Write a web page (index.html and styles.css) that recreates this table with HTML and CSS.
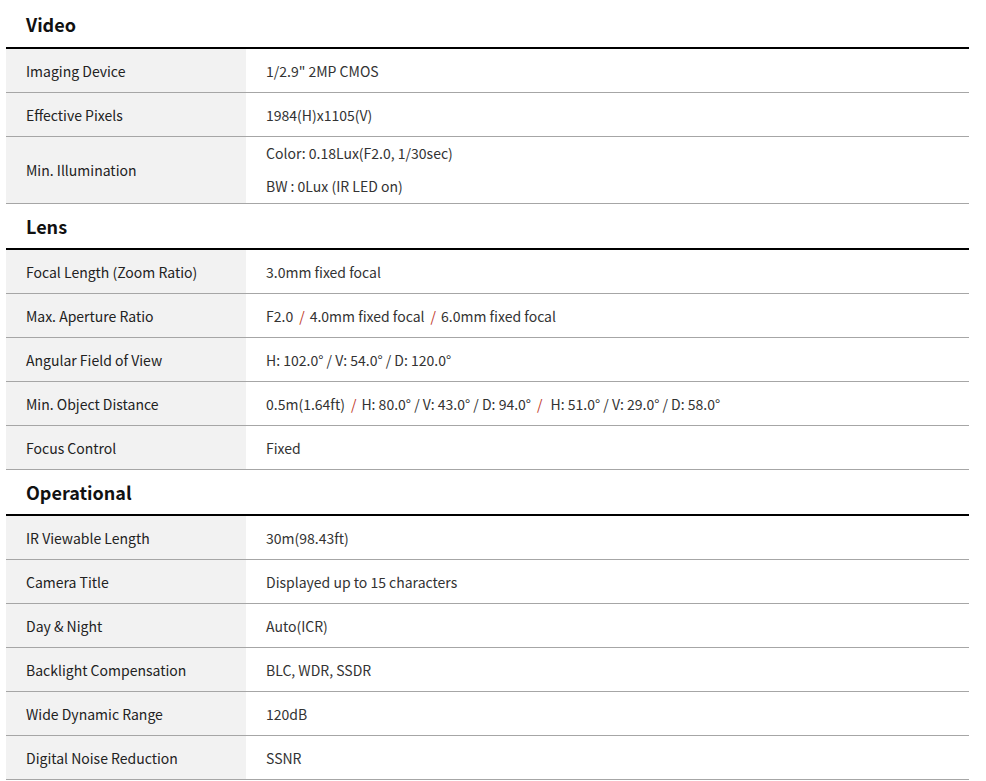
FILE: index.html
```html
<!DOCTYPE html>
<html lang="en">
<head>
<meta charset="utf-8">
<title>Specifications</title>
<link rel="stylesheet" href="styles.css">
</head>
<body>
<div class="spec">
  <section class="group first">
    <h2 class="group-title">Video</h2>
    <div class="rows">
      <div class="row"><div class="label">Imaging Device</div><div class="value">1/2.9" 2MP CMOS</div></div>
      <div class="row"><div class="label">Effective Pixels</div><div class="value">1984(H)x1105(V)</div></div>
      <div class="row"><div class="label">Min. Illumination</div><div class="value multi"><p>Color: 0.18Lux(F2.0, 1/30sec)</p><p>BW : 0Lux (IR LED on)</p></div></div>
    </div>
  </section>
  <section class="group">
    <h2 class="group-title">Lens</h2>
    <div class="rows">
      <div class="row"><div class="label">Focal Length (Zoom Ratio)</div><div class="value">3.0mm fixed focal</div></div>
      <div class="row"><div class="label">Max. Aperture Ratio</div><div class="value">F2.0<span class="sep">/</span>4.0mm fixed focal<span class="sep">/</span>6.0mm fixed focal</div></div>
      <div class="row"><div class="label">Angular Field of View</div><div class="value">H: 102.0° / V: 54.0° / D: 120.0°</div></div>
      <div class="row"><div class="label">Min. Object Distance</div><div class="value">0.5m(1.64ft)<span class="sep">/</span>H: 80.0° / V: 43.0° / D: 94.0°<span class="sep wide">/</span>H: 51.0° / V: 29.0° / D: 58.0°</div></div>
      <div class="row"><div class="label">Focus Control</div><div class="value">Fixed</div></div>
    </div>
  </section>
  <section class="group">
    <h2 class="group-title">Operational</h2>
    <div class="rows">
      <div class="row"><div class="label">IR Viewable Length</div><div class="value">30m(98.43ft)</div></div>
      <div class="row"><div class="label">Camera Title</div><div class="value">Displayed up to 15 characters</div></div>
      <div class="row"><div class="label">Day &amp; Night</div><div class="value">Auto(ICR)</div></div>
      <div class="row"><div class="label">Backlight Compensation</div><div class="value">BLC, WDR, SSDR</div></div>
      <div class="row"><div class="label">Wide Dynamic Range</div><div class="value">120dB</div></div>
      <div class="row"><div class="label">Digital Noise Reduction</div><div class="value">SSNR</div></div>
    </div>
  </section>
</div>
</body>
</html>
```

FILE: styles.css
```css
html, body {
  margin: 0;
  padding: 0;
  background: #ffffff;
}

body {
  font-family: "Noto Sans CJK KR", "Noto Sans", sans-serif;
  font-size: 14px;
  color: #333333;
}

.spec {
  margin: 0 17px 0 6px;
}

.group-title {
  margin: 0;
  height: 44px;
  padding-left: 20px;
  display: flex;
  align-items: center;
  font-size: 18px;
  font-weight: 700;
  color: #111111;
  border-bottom: 2px solid #000000;
}

.group.first .group-title {
  height: 48px;
  padding-top: 1px;
  box-sizing: border-box;
  height: 49px;
}

.row {
  display: grid;
  grid-template-columns: 240px 1fr;
  border-bottom: 1px solid #a6a6a6;
  min-height: 43px;
}

.label {
  background: #f2f2f2;
  padding-left: 20px;
  display: flex;
  align-items: center;
  color: #222222;
}

.value {
  padding-left: 20px;
  display: flex;
  align-items: center;
  color: #333333;
  white-space: pre;
}

.value.multi {
  flex-direction: column;
  align-items: flex-start;
  justify-content: center;
}

.value.multi p {
  margin: 0;
  line-height: 33px;
}

.sep {
  color: #c0392b;
  padding: 0 5px 0 6px;
}

.sep.wide {
  padding: 0 8px 0 6px;
}
```
